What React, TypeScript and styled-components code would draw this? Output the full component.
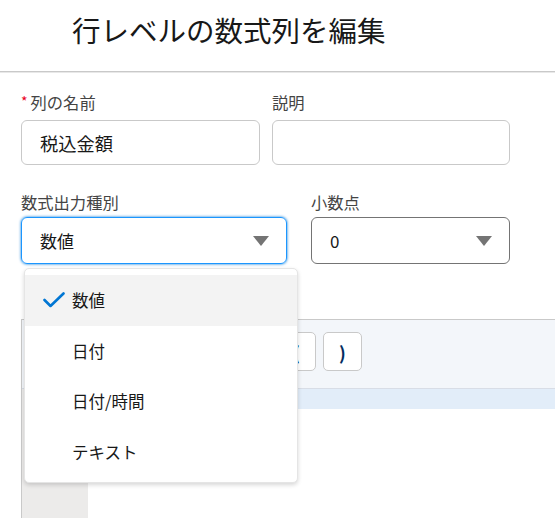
import styled, { createGlobalStyle } from 'styled-components'
import { FunctionComponent, ReactElement } from 'react'

const GlobalStyle = createGlobalStyle`
    html, body {
        margin: 0;
        padding: 0;
        background: #ffffff;
    }
    body {
        font-family: "Noto Sans CJK JP", "Noto Sans", sans-serif;
        color: #181818;
        overflow: hidden;
    }
`

const Page = styled.div`
    width: 555px;
    height: 518px;
    overflow: hidden;
    position: relative;
`

const Header = styled.header`
    height: 72px;
    display: flex;
    align-items: center;
    padding-left: 72px;
    border-bottom: 1px solid #c9c9c9;
    box-sizing: border-box;
    box-shadow: 0 1px 0 #e8e8e8;
`

const Title = styled.h1`
    margin: 0;
    font-size: 28.5px;
    font-weight: 400;
    line-height: 1;
    color: #181818;
    margin-top: -10px;
`

const Form = styled.div`
    padding: 18px 45px 0 21px;
`

type RowProps = {
    $columns: string
    $gap: number
    $top?: number
}

const Row = styled.div<RowProps>`
    display: grid;
    grid-template-columns: ${(p) => p.$columns};
    column-gap: ${(p) => p.$gap}px;
    margin-top: ${(p) => p.$top ?? 0}px;
`

const Field = styled.div`
    display: flex;
    flex-direction: column;
    position: relative;
`

const Label = styled.label<{ $gap: number }>`
    display: flex;
    align-items: center;
    height: 24px;
    font-size: 16.3px;
    color: #444444;
    margin-bottom: ${(p) => p.$gap}px;
`

const Required = styled.span`
    color: #ea001e;
    font-size: 14px;
    margin-right: 3px;
    margin-top: -2px;
`

const Input = styled.div`
    height: 45px;
    box-sizing: border-box;
    border: 1px solid #c9c9c9;
    border-radius: 6px;
    display: flex;
    align-items: center;
    padding-left: 18px;
    font-size: 18.3px;
    color: #181818;
`

const Select = styled.div<{ $focused?: boolean }>`
    height: 47px;
    box-sizing: border-box;
    border: 1px solid ${(p) => (p.$focused ? '#1b96ff' : '#747474')};
    box-shadow: ${(p) => (p.$focused ? '0 0 3px #0176d3' : 'none')};
    border-radius: 6px;
    display: flex;
    align-items: center;
    justify-content: space-between;
    padding: 0 17px 0 18px;
    font-size: 17px;
    color: #181818;
`

const Caret = styled.span`
    width: 0;
    height: 0;
    border-left: 8.5px solid transparent;
    border-right: 8.5px solid transparent;
    border-top: 10px solid #747474;
    margin-top: 1px;
`

const Dropdown = styled.ul`
    position: absolute;
    top: calc(100% + 4px);
    left: 3px;
    width: 274px;
    margin: 0;
    padding: 6px 0 5px;
    list-style: none;
    background: #ffffff;
    border: 1px solid #e5e5e5;
    border-radius: 5px;
    box-shadow: 0 2px 4px rgba(0, 0, 0, 0.16);
    box-sizing: border-box;
    z-index: 10;
`

const Option = styled.li<{ $selected?: boolean }>`
    height: 50.5px;
    display: flex;
    align-items: center;
    padding-left: 18px;
    background: ${(p) => (p.$selected ? '#f3f3f3' : 'transparent')};
    font-size: 16.5px;
    color: #181818;
`

const CheckSlot = styled.span`
    width: 29px;
    display: flex;
    align-items: center;
`

const Editor = styled.div`
    margin: 55px 0 0 21px;
    border-top: 1px solid #c9c9c9;
    border-left: 1px solid #c9c9c9;
`

const Toolbar = styled.div`
    height: 69px;
    box-sizing: border-box;
    background: #f3f6fa;
    border-bottom: 1px solid #d8dde6;
    display: flex;
    align-items: flex-start;
    gap: 7px;
    padding: 12px 0 0 25px;
`

const OpButton = styled.div`
    width: 39px;
    height: 39px;
    box-sizing: border-box;
    background: #ffffff;
    border: 1px solid #c9c9c9;
    border-radius: 5px;
    display: flex;
    align-items: center;
    justify-content: center;
    font-size: 18px;
    font-weight: 700;
    color: #032d60;
`

const EditorBody = styled.div`
    display: flex;
    height: 200px;
`

const Gutter = styled.div`
    width: 66px;
    background: #ecebea;
`

const Lines = styled.div`
    flex: 1;
`

const ActiveLine = styled.div`
    height: 20px;
    background: #e2edf9;
`

const options = ['数値', '日付', '日付/時間', 'テキスト']
const operators = ['+', '-', '*', '/', '^', '(', ')']

const Check = (): ReactElement => (
    <svg width="22" height="16" viewBox="0 0 22 16">
        <polyline
            points="1.5,8 7.5,14 20.5,1.5"
            fill="none"
            stroke="#0176d3"
            strokeWidth="2.6"
            strokeLinecap="round"
            strokeLinejoin="round"
        />
    </svg>
)

const App: FunctionComponent = (): ReactElement => {
    return (
        <Page>
            <GlobalStyle />
            <Header>
                <Title>行レベルの数式列を編集</Title>
            </Header>

            <Form>
                <Row $columns="239px 238px" $gap={12}>
                    <Field>
                        <Label $gap={6}>
                            <Required>*</Required>列の名前
                        </Label>
                        <Input>税込金額</Input>
                    </Field>
                    <Field>
                        <Label $gap={6}>説明</Label>
                        <Input />
                    </Field>
                </Row>

                <Row $columns="266px 199px" $gap={24} $top={25}>
                    <Field>
                        <Label $gap={3}>数式出力種別</Label>
                        <Select $focused>
                            数値
                            <Caret />
                        </Select>
                        <Dropdown>
                            {options.map((option, i) => (
                                <Option key={option} $selected={i === 0}>
                                    <CheckSlot>{i === 0 && <Check />}</CheckSlot>
                                    {option}
                                </Option>
                            ))}
                        </Dropdown>
                    </Field>
                    <Field>
                        <Label $gap={3}>小数点</Label>
                        <Select>
                            0
                            <Caret />
                        </Select>
                    </Field>
                </Row>
            </Form>

            <Editor>
                <Toolbar>
                    {operators.map((op) => (
                        <OpButton key={op}>{op}</OpButton>
                    ))}
                </Toolbar>
                <EditorBody>
                    <Gutter />
                    <Lines>
                        <ActiveLine />
                    </Lines>
                </EditorBody>
            </Editor>
        </Page>
    )
}

export default App
